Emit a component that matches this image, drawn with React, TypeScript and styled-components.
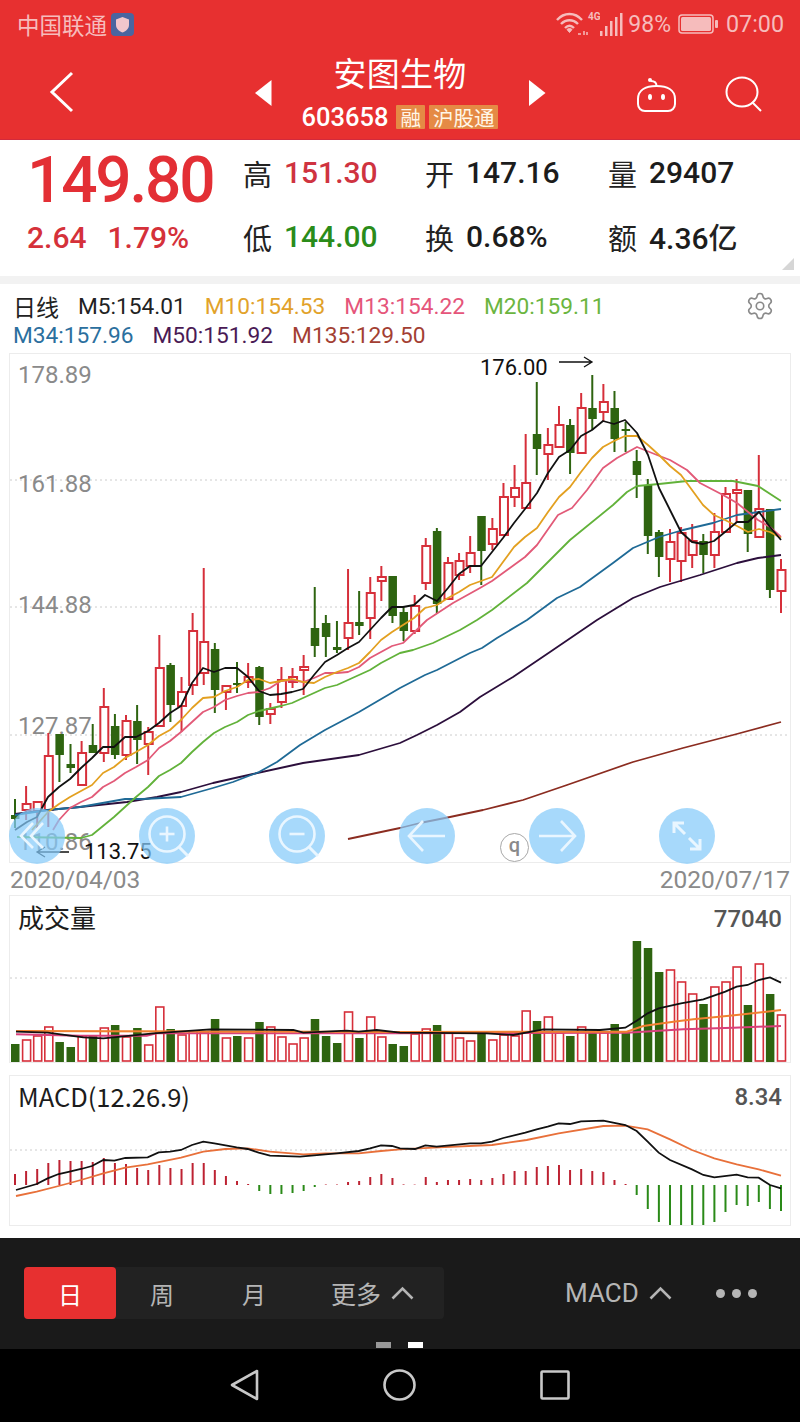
import styled, { createGlobalStyle } from "styled-components";
import { Settings } from "lucide-react";

const GlobalStyle = createGlobalStyle`
  html, body {
    margin: 0;
    padding: 0;
    background: #fff;
  }
  * { box-sizing: border-box; }
`;

const NUM = `Roboto, "Noto Sans CJK SC", sans-serif`;
const CJK = `"Noto Sans CJK SC", Roboto, sans-serif`;

const UP = "#d62f3a";
const DOWN = "#2e6410";

// wick top, wick bottom, body top, body bottom, all in page pixels
type Candle = [number, number, number, number];

const candles: Candle[] = [
  [799, 828, 815, 819], [786, 820, 804, 810], [802, 828, 802, 811], [733, 827, 756, 810],
  [734, 782, 734, 755], [744, 773, 764, 768], [741, 786, 753, 785], [724, 753, 745, 753],
  [688, 762, 707, 753], [714, 759, 726, 755], [715, 760, 721, 755], [705, 764, 721, 740],
  [727, 775, 732, 744], [635, 727, 668, 726], [663, 722, 665, 705], [677, 732, 692, 706],
  [613, 695, 631, 685], [568, 685, 642, 673], [643, 713, 649, 690], [685, 710, 686, 692],
  [662, 693, 683, 685], [663, 688, 677, 682], [666, 725, 667, 717], [703, 724, 709, 714],
  [667, 708, 680, 702], [668, 688, 677, 682], [655, 695, 667, 670], [587, 657, 628, 646],
  [615, 657, 623, 637], [621, 653, 647, 650], [569, 650, 623, 638], [591, 635, 622, 626],
  [577, 639, 593, 618], [566, 601, 577, 581], [576, 623, 576, 616], [607, 641, 612, 631],
  [595, 634, 606, 631], [538, 590, 546, 583], [528, 613, 531, 604], [557, 600, 563, 599],
  [553, 580, 561, 575], [536, 573, 553, 566], [516, 585, 516, 551], [518, 550, 529, 544],
  [483, 535, 497, 535], [465, 507, 488, 497], [434, 508, 483, 508], [382, 475, 434, 449],
  [428, 480, 445, 454], [406, 447, 425, 447], [419, 474, 425, 453], [393, 453, 408, 453],
  [375, 430, 408, 419], [384, 422, 402, 412], [391, 452, 408, 439], [422, 452, 429, 431],
  [450, 498, 461, 475], [479, 554, 485, 536], [530, 577, 532, 557], [529, 582, 542, 559],
  [527, 582, 533, 561], [524, 568, 541, 555], [534, 573, 541, 555], [513, 568, 532, 555],
  [487, 532, 494, 532], [479, 523, 490, 493], [490, 552, 490, 534], [455, 538, 509, 537],
  [509, 598, 509, 590], [559, 613, 570, 591],
];

// 1 = up (hollow red), 0 = down (solid green)
const isUp = [
  0, 1, 1, 1, 0, 0, 1, 0, 1, 0, 1, 0, 1, 1, 0, 1, 1, 1, 0, 1,
  0, 1, 0, 1, 1, 1, 1, 0, 0, 0, 1, 0, 1, 1, 0, 0, 1, 1, 0, 1,
  1, 1, 0, 1, 1, 1, 1, 0, 1, 1, 0, 1, 0, 1, 0, 0, 0, 0, 0, 1,
  1, 1, 0, 1, 1, 1, 0, 1, 0, 1,
];

const xAt = (i: number) => 15 + (766 / 69) * i;

// volume bar tops, read from the chart
const volumeTops = [
  1044, 1040, 1036, 1027, 1042, 1047, 1036, 1036, 1028, 1025, 1037, 1028, 1045, 1007, 1029,
  1035, 1031, 1032, 1019, 1038, 1036, 1038, 1022, 1027, 1037, 1044, 1038, 1019, 1036, 1043,
  1012, 1038, 1017, 1037, 1044, 1046, 1034, 1029, 1025, 1032, 1038, 1041, 1033, 1040, 1035,
  1036, 1011, 1021, 1017, 1033, 1036, 1027, 1032, 1033, 1024, 1032, 941, 948, 972, 970,
  982, 994, 1004, 987, 982, 967, 1005, 964, 994, 1015,
];

// macd histogram, signed height in pixels
const macdBars = [
  11, 14, 16, 22, 25, 24, 24, 23, 27, 22, 21, 17, 15, 20, 17, 16, 22, 22, 15, 9,
  4, 1, -6, -9, -9, -8, -6, -2, 0.5, 0.5, 3, 4, 8, 11, 7, 0.6, 0.4, 8, 3, 5,
  5, 6, 5, 7, 11, 14, 14, 18, 19, 20, 15, 16, 14, 13, 5, 1, -10, -24, -37, -40,
  -40, -40, -40, -37, -27, -20, -21, -17, -24, -26,
];

type Pt = [number, number];
const toPath = (pts: Pt[]) => pts.map((p, i) => `${i ? "L" : "M"}${p[0]} ${p[1]}`).join(" ");

const m5: Pt[] = [
  [15, 830], [27, 822], [37, 817], [48, 797], [59, 787], [70, 779], [81, 768], [92, 758], [103, 747],
  [114, 747], [125, 737], [136, 737], [148, 731], [159, 723], [170, 713], [181, 706], [192, 683],
  [203, 668], [214, 672], [225, 668], [237, 668], [248, 677], [259, 691], [270, 695], [281, 694],
  [292, 692], [303, 689], [314, 675], [325, 662], [337, 655], [348, 648], [359, 642], [370, 630],
  [381, 618], [392, 607], [403, 607], [414, 605], [425, 595], [437, 601], [448, 588], [459, 574],
  [470, 566], [481, 566], [492, 552], [503, 538], [514, 523], [525, 509], [537, 493], [548, 473],
  [559, 457], [570, 450], [581, 436], [592, 430], [603, 421], [614, 424], [625, 420], [637, 433],
  [648, 455], [659, 488], [670, 510], [681, 532], [692, 542], [703, 544], [714, 541], [725, 532],
  [737, 522], [748, 522], [759, 512], [770, 527], [781, 540],
];
const m10: Pt[] = [
  [32, 830], [48, 812], [59, 804], [70, 797], [81, 791], [92, 785], [103, 773], [114, 767], [125, 758],
  [136, 752], [148, 745], [159, 736], [170, 730], [181, 720], [192, 708], [203, 698], [214, 697],
  [225, 691], [237, 687], [248, 680], [259, 679], [270, 683], [281, 681], [292, 679], [303, 682],
  [314, 683], [325, 677], [337, 672], [348, 668], [359, 663], [370, 652], [381, 640], [392, 632],
  [403, 625], [414, 618], [425, 608], [437, 605], [448, 598], [459, 592], [470, 585], [481, 581],
  [492, 577], [503, 562], [514, 547], [525, 537], [537, 528], [548, 512], [559, 497], [570, 487],
  [581, 472], [592, 458], [603, 447], [614, 441], [625, 436], [637, 436], [648, 445], [659, 455],
  [670, 466], [681, 475], [692, 490], [703, 505], [714, 515], [725, 520], [737, 526], [748, 532],
  [759, 529], [770, 532], [781, 538],
];
const m13: Pt[] = [
  [53, 830], [59, 820], [70, 808], [81, 802], [92, 797], [103, 787], [114, 781], [125, 773], [136, 767],
  [148, 760], [159, 748], [170, 741], [181, 732], [192, 722], [203, 712], [214, 707], [225, 700],
  [237, 696], [248, 693], [259, 692], [270, 688], [281, 681], [292, 680], [303, 682], [314, 678],
  [325, 673], [337, 673], [348, 672], [359, 667], [370, 658], [381, 652], [392, 646], [403, 643],
  [427, 620], [453, 603], [480, 588], [492, 581], [525, 557], [537, 545], [558, 515], [572, 508],
  [587, 490], [603, 468], [617, 458], [637, 447], [657, 455], [670, 460], [687, 470], [700, 483],
  [723, 495], [737, 503], [758, 520], [770, 527], [781, 537],
];
const m20: Pt[] = [
  [17, 837], [81, 838], [92, 835], [114, 817], [125, 807], [136, 797], [148, 787], [159, 776], [170, 770],
  [181, 763], [192, 752], [203, 742], [214, 733], [225, 727], [237, 722], [248, 715], [259, 711],
  [281, 706], [292, 703], [303, 698], [314, 693], [325, 688], [337, 685], [348, 680], [359, 675],
  [370, 670], [381, 663], [400, 653], [413, 650], [433, 643], [460, 630], [477, 620], [492, 610],
  [527, 583], [570, 540], [613, 505], [627, 492], [637, 486], [659, 484], [687, 481], [733, 481],
  [758, 486], [781, 501],
];
const m34: Pt[] = [
  [15, 815], [48, 810], [80, 807], [125, 799], [143, 799], [181, 797], [213, 788], [233, 782], [259, 772],
  [277, 762], [300, 745], [325, 730], [359, 712], [400, 688], [425, 675], [437, 670], [470, 653],
  [482, 648], [497, 638], [527, 620], [557, 598], [580, 587], [613, 563], [633, 548], [659, 537],
  [683, 530], [713, 523], [737, 515], [759, 512], [781, 509],
];
const m50: Pt[] = [
  [15, 814], [48, 810], [80, 807], [127, 802], [157, 797], [181, 792], [213, 783], [253, 774], [303, 763],
  [359, 755], [400, 743], [417, 735], [437, 725], [460, 712], [480, 697], [513, 677], [550, 652],
  [597, 620], [633, 598], [660, 587], [700, 575], [737, 563], [758, 558], [781, 555],
];
const m135: Pt[] = [
  [348, 839], [400, 828], [420, 823], [450, 817], [483, 810], [523, 800], [567, 785], [633, 762],
  [683, 748], [733, 735], [781, 722],
];
const maLines: [Pt[], string][] = [
  [m135, "#8b2c20"], [m50, "#2c0f3c"], [m34, "#1f6a96"], [m20, "#62b23a"],
  [m13, "#e25a78"], [m10, "#e3a020"], [m5, "#111"],
];

// lower panels are read at 3x, so convert once here
const z = (ox: number, oy: number, pts: Pt[]): Pt[] =>
  pts.map(([a, b]) => [ox + a / 3, oy + b / 3]);

const volBlack = [
  ...z(0, 890, [[48, 425], [143, 428], [250, 442], [310, 445], [460, 430], [630, 418], [880, 420], [910, 428], [1040, 422], [1076, 425], [1130, 420], [1200, 428]]),
  ...z(400, 890, [[260, 430], [340, 435], [430, 418], [600, 420], [676, 413], [710, 392], [743, 370], [776, 355], [843, 340], [910, 328], [976, 305], [1010, 290], [1043, 285], [1076, 270], [1110, 262], [1143, 278]]),
];
const volOrange = [
  ...z(0, 890, [[48, 423], [1200, 426]]),
  ...z(400, 890, [[680, 425], [730, 408], [820, 395], [880, 388], [1010, 375], [1143, 360]]),
];
const volPink = [
  ...z(0, 890, [[48, 433], [240, 437], [440, 437], [470, 430], [1200, 430]]),
  ...z(400, 890, [[680, 428], [850, 418], [1000, 413], [1143, 408]]),
];
const macdBlack = [
  ...z(0, 1070, [[48, 360], [110, 342], [143, 325], [176, 312], [209, 305], [243, 297], [276, 288], [310, 270], [343, 272], [376, 264], [443, 262], [476, 247], [510, 245], [543, 240], [576, 225], [610, 215], [643, 220], [710, 232], [743, 237], [776, 248], [810, 257], [900, 260], [1010, 250], [1076, 243], [1110, 235], [1143, 226], [1176, 228]]),
  ...z(400, 1070, [[0, 235], [45, 237], [76, 226], [110, 230], [210, 220], [243, 220], [276, 215], [310, 204], [376, 188], [410, 178], [443, 170], [476, 160], [510, 162], [543, 154], [610, 152], [676, 165], [710, 183], [743, 215], [776, 248], [810, 270], [876, 298], [910, 315], [943, 322], [1010, 314], [1043, 322], [1076, 323], [1110, 345], [1143, 355]]),
];
const macdOrange = [
  ...z(0, 1070, [[48, 378], [110, 365], [176, 348], [243, 330], [310, 310], [376, 293], [443, 283], [543, 263], [610, 245], [676, 237], [743, 235], [810, 245], [910, 253], [976, 250], [1076, 250], [1143, 243]]),
  ...z(400, 1070, [[0, 238], [100, 233], [276, 225], [380, 210], [476, 190], [610, 168], [676, 167], [743, 178], [810, 208], [876, 240], [943, 265], [1010, 283], [1076, 298], [1143, 317]]),
];

const Page = styled.div`
  width: 800px;
  height: 1422px;
  display: flex;
  flex-direction: column;
  overflow: hidden;
  background: #fff;
  font-family: ${NUM};
`;

const Header = styled.header`
  height: 140px;
  flex: none;
  background: #e73030;
  border-bottom: 1px solid #d22a3c;
`;

const StatusBar = styled.div`
  height: 48px;
  padding: 0 16px 0 17px;
  display: flex;
  align-items: center;
  justify-content: space-between;
  color: #f6bcbc;
  font-size: 22.5px;
`;

const StatusGroup = styled.div`
  display: flex;
  align-items: center;
`;

const Carrier = styled.span`
  font-family: ${CJK};
  margin-right: 4px;
`;

const BatteryLabel = styled.span`
  margin: 0 7px 0 5px;
  font-size: 23px;
`;

const Clock = styled.span`
  margin-left: 8px;
  font-size: 23.3px;
`;

const Nav = styled.div`
  height: 91px;
  position: relative;
  display: flex;
  flex-direction: column;
  align-items: center;
  color: #fff;
`;

const Title = styled.div`
  margin-top: 3px;
  font-family: ${CJK};
  font-size: 33px;
  line-height: 42px;
  letter-spacing: 0.3px;
`;

const CodeRow = styled.div`
  display: flex;
  align-items: center;
  gap: 4px;
  margin-top: 12px;
  height: 24px;
`;

const Code = styled.span`
  font-size: 25.5px;
  font-weight: 500;
  margin-right: 4px;
`;

const Tag = styled.span`
  height: 24px;
  padding: 0 4px;
  display: flex;
  align-items: center;
  background: #e58a45;
  color: #fff6e8;
  font-family: ${CJK};
  font-size: 20.5px;
  border-radius: 1px;
`;

const NavIcon = styled.svg<{ $left: number; $top: number }>`
  position: absolute;
  left: ${(p) => p.$left}px;
  top: ${(p) => p.$top}px;
`;

const Stats = styled.section`
  height: 136px;
  flex: none;
  position: relative;
  padding: 8px 0 0 27px;
  display: grid;
  grid-template-columns: 216px 182px 183px 1fr;
  grid-template-rows: 50px 54px;
  row-gap: 12px;
  align-items: center;
`;

const Price = styled.div`
  color: #e32f35;
  font-size: 64px;
  font-weight: 500;
  letter-spacing: -2.2px;
  line-height: 50px;
  transform: translate(0px, 8px);
`;

const Change = styled.div`
  color: #d5313a;
  font-size: 30px;
  display: flex;
  gap: 21px;
  font-weight: 500;
`;

const Stat = styled.div`
  display: flex;
  align-items: center;
  gap: 12px;
  font-size: 30px;
  line-height: 40px;
`;

const StatName = styled.span`
  font-family: ${CJK};
  font-size: 29px;
  color: #222;
`;

const StatValue = styled.span<{ $color?: string }>`
  color: ${(p) => p.$color || "#1c1c1c"};
  font-weight: 500;
  font-family: ${NUM};
`;

const Corner = styled.div`
  position: absolute;
  right: 6px;
  bottom: 6px;
  width: 0;
  height: 0;
  border-left: 12px solid transparent;
  border-bottom: 12px solid #d6d6d6;
`;

const Strip = styled.div`
  height: 8px;
  flex: none;
  background: #f2f2f2;
`;

const Legend = styled.div`
  height: 69px;
  flex: none;
  position: relative;
  padding: 8px 0 0 13px;
  font-size: 22.7px;
  line-height: 29px;
`;

const LegendRow = styled.div`
  display: flex;
  gap: 19px;
`;

const LegendName = styled.span`
  font-family: ${CJK};
  font-size: 23px;
  color: #222;
`;

const LegendItem = styled.span<{ $color: string }>`
  color: ${(p) => p.$color};
`;

const Gear = styled.div`
  position: absolute;
  right: 25px;
  top: 7px;
  color: #8a8a8a;
  display: flex;
`;

const Panel = styled.div<{ $height: number }>`
  position: relative;
  flex: none;
  height: ${(p) => p.$height}px;
  margin: 0 9px;
  border: 1px solid #ececec;
`;

const PanelSvg = styled.svg`
  display: block;
  position: absolute;
  left: -1px;
  top: -1px;
`;

const AxisText = styled.text`
  font-family: ${NUM};
  font-size: 24px;
  fill: #8a8a8a;
`;

const MarkText = styled.text`
  font-family: ${NUM};
  font-size: 22px;
  fill: #111;
`;

const Controls = styled.div`
  position: absolute;
  left: -1px;
  bottom: -2px;
  display: flex;
  gap: 74px;
`;

const RoundButton = styled.button`
  width: 56px;
  height: 56px;
  padding: 0;
  border: none;
  border-radius: 50%;
  background: rgba(133, 203, 250, 0.72);
  display: flex;
  align-items: center;
  justify-content: center;
`;

const QBadge = styled.div`
  position: absolute;
  left: 490px;
  bottom: 0;
  width: 29px;
  height: 29px;
  border: 1px solid #a8a8a8;
  border-radius: 50%;
  background: #fff;
  color: #8a8a8a;
  font-size: 20px;
  font-weight: 500;
  line-height: 23px;
  text-align: center;
`;

const DateRow = styled.div`
  height: 32px;
  flex: none;
  padding: 0 10px;
  display: flex;
  justify-content: space-between;
  align-items: center;
  color: #8a8a8a;
  font-size: 24.5px;
`;

const PanelTitle = styled.div<{ $size: number; $top: number }>`
  position: absolute;
  left: 8px;
  top: ${(p) => p.$top}px;
  font-family: ${CJK};
  font-size: ${(p) => p.$size}px;
  line-height: 36px;
  color: #1c1c1c;
`;

const PanelValue = styled.div<{ $top: number }>`
  position: absolute;
  right: 8px;
  top: ${(p) => p.$top}px;
  font-size: 24px;
  font-weight: 500;
  line-height: 36px;
  color: #555;
`;

const PanelGap = styled.div`
  height: 12px;
  flex: none;
`;

const Toolbar = styled.footer`
  margin-top: 12px;
  height: 111px;
  flex: none;
  position: relative;
  background: #1a1a1a;
  padding: 29px 0 0 24px;
  display: flex;
  align-items: flex-start;
  color: #b5b5b5;
`;

const Periods = styled.div`
  width: 420px;
  height: 52px;
  display: flex;
  align-items: center;
  background: #222;
  border-radius: 4px;
  font-family: ${CJK};
  font-size: 24px;
`;

const Period = styled.div<{ $active?: boolean }>`
  width: 92px;
  height: 52px;
  display: flex;
  align-items: center;
  justify-content: center;
  border-radius: 4px;
  background: ${(p) => (p.$active ? "#e73030" : "transparent")};
  color: ${(p) => (p.$active ? "#fff" : "#b5b5b5")};
`;

const MorePeriod = styled(Period)`
  width: 144px;
  padding-left: 31px;
  justify-content: flex-start;
  gap: 10px;
  font-size: 25px;
`;

const IndicatorPick = styled.div`
  margin-left: 121px;
  height: 52px;
  display: flex;
  align-items: center;
  gap: 10px;
  font-size: 26px;
`;

const Dots = styled.div`
  margin-left: 44px;
  height: 52px;
  display: flex;
  align-items: center;
  gap: 7px;
`;

const Dot = styled.span`
  width: 9px;
  height: 9px;
  border-radius: 50%;
  background: #b5b5b5;
`;

const Pager = styled.div`
  position: absolute;
  left: 376px;
  bottom: 1px;
  display: flex;
  gap: 17px;
`;

const PagerMark = styled.span<{ $on?: boolean }>`
  width: 15px;
  height: 6px;
  background: ${(p) => (p.$on ? "#fff" : "#999")};
`;

const SystemBar = styled.nav`
  flex: 1;
  background: #000;
  display: flex;
  align-items: center;
  padding: 0 0 2px 229px;
  gap: 124px;
`;

const Chevron = () => (
  <svg width="23" height="14" viewBox="0 0 23 14" fill="none" stroke="currentColor" strokeWidth="2.6">
    <path d="M1.5 12.5 11.5 2.5 21.5 12.5" />
  </svg>
);

const Glass = ({ minus }: { minus?: boolean }) => (
  <svg width="56" height="56" viewBox="0 0 56 56" fill="none" stroke="#e9f6ff" strokeWidth="2.6">
    <circle cx="28" cy="26" r="17.5" />
    <path d="M40 39 49 48" strokeWidth="3" />
    <path d="M20.5 26h15" />
    {!minus && <path d="M28 18.5v15" />}
  </svg>
);

function Candles() {
  return (
    <g>
      {candles.map(([wt, wb, bt, bb], i) => {
        const x = xAt(i);
        const up = isUp[i] === 1;
        const color = up ? UP : DOWN;
        return (
          <g key={i}>
            <path d={`M${x} ${wt}V${wb}`} stroke={color} strokeWidth="2" />
            {up ? (
              <rect x={x - 3.5} y={bt} width="8" height={Math.max(bb - bt, 2)} fill="#fff" stroke={color} strokeWidth="2" />
            ) : (
              <rect x={x - 4} y={bt} width="8.5" height={Math.max(bb - bt, 2)} fill={color} />
            )}
          </g>
        );
      })}
    </g>
  );
}

function App() {
  return (
    <>
      <GlobalStyle />
      <Page>
        <Header>
          <StatusBar>
            <StatusGroup>
              <Carrier>中国联通</Carrier>
              <svg width="23" height="23" viewBox="0 0 23 23">
                <rect width="23" height="23" rx="4" fill="#4a65a0" />
                <path d="M11.5 4 18 6.5V12c0 3.5-2.8 6-6.5 7.5C7.8 18 5 15.5 5 12V6.5Z" fill="#f2c6cc" />
              </svg>
            </StatusGroup>
            <StatusGroup>
              <svg width="44" height="26" viewBox="0 0 44 26" fill="none" stroke="#f6bcbc">
                <path d="M1 9C8 1 19 1 26 9M5 13c5-5 12-5 17 0M9 17c3-3 6-3 9 0" strokeWidth="2.4" />
                <path d="M13.5 21.5 11 18.5c1.6-1.3 3.4-1.3 5 0Z" fill="#f6bcbc" />
                <path d="M22 23h3M28 20v4M31 21v3" strokeWidth="1.5" />
                <text x="32" y="9" fontSize="10" fontWeight="700" fill="#f6bcbc" stroke="none" fontFamily="Roboto">4G</text>
              </svg>
              <svg width="23" height="26" viewBox="0 0 23 26" fill="#f6bcbc">
                <rect x="0" y="20" width="2.5" height="5" />
                <rect x="5" y="15" width="2.5" height="10" />
                <rect x="10" y="10" width="2.5" height="15" />
                <rect x="15" y="6" width="2.5" height="19" />
                <rect x="20" y="2" width="2.5" height="23" />
              </svg>
              <BatteryLabel>98%</BatteryLabel>
              <svg width="40" height="20" viewBox="0 0 40 20">
                <rect x="1" y="1" width="34" height="18" rx="3" fill="none" stroke="#f6bcbc" strokeWidth="1.5" />
                <rect x="3" y="3" width="30" height="14" rx="1.5" fill="#f6bcbc" />
                <rect x="37" y="6" width="3" height="8" rx="1" fill="#f6bcbc" />
              </svg>
              <Clock>07:00</Clock>
            </StatusGroup>
          </StatusBar>
          <Nav>
            <NavIcon $left={49} $top={23} width="26" height="42" viewBox="0 0 26 42" fill="none" stroke="#fff" strokeWidth="3">
              <path d="M23 2 3 21 23 40" />
            </NavIcon>
            <NavIcon $left={255} $top={32} width="17" height="26" viewBox="0 0 17 26" fill="#fff">
              <path d="M16.5 0V26L0 13Z" />
            </NavIcon>
            <Title>安图生物</Title>
            <CodeRow>
              <Code>603658</Code>
              <Tag>融</Tag>
              <Tag>沪股通</Tag>
            </CodeRow>
            <NavIcon $left={529} $top={32} width="17" height="26" viewBox="0 0 17 26" fill="#fff">
              <path d="M0 0V26L16.5 13Z" />
            </NavIcon>
            <NavIcon $left={636} $top={28} width="41" height="37" viewBox="0 0 41 37" fill="none" stroke="#fff" strokeWidth="2">
              <path d="M2 23C2 14 10 10 20.5 10S39 14 39 23v5c0 4-3 7-7 7H9c-4 0-7-3-7-7Z" />
              <path d="M20.5 10C20.5 6 18 5 15 5" />
              <circle cx="14" cy="4" r="2" fill="#fff" stroke="none" />
              <ellipse cx="14" cy="21" rx="2" ry="3" fill="#fff" stroke="none" />
              <ellipse cx="27" cy="21" rx="2" ry="3" fill="#fff" stroke="none" />
            </NavIcon>
            <NavIcon $left={725} $top={28} width="38" height="36" viewBox="0 0 38 36" fill="none" stroke="#fff" strokeWidth="2">
              <ellipse cx="17" cy="16" rx="15.5" ry="14.5" />
              <path d="M27 26 36 35" />
            </NavIcon>
          </Nav>
        </Header>

        <Stats>
          <Price>149.80</Price>
          <Stat>
            <StatName>高</StatName>
            <StatValue $color="#cf3340">151.30</StatValue>
          </Stat>
          <Stat>
            <StatName>开</StatName>
            <StatValue>147.16</StatValue>
          </Stat>
          <Stat>
            <StatName>量</StatName>
            <StatValue>29407</StatValue>
          </Stat>
          <Change>
            <span>2.64</span>
            <span>1.79%</span>
          </Change>
          <Stat>
            <StatName>低</StatName>
            <StatValue $color="#2a8c1a">144.00</StatValue>
          </Stat>
          <Stat>
            <StatName>换</StatName>
            <StatValue>0.68%</StatValue>
          </Stat>
          <Stat>
            <StatName>额</StatName>
            <StatValue>
              4.36<StatName>亿</StatName>
            </StatValue>
          </Stat>
          <Corner />
        </Stats>
        <Strip />

        <Legend>
          <LegendRow>
            <LegendName>日线</LegendName>
            <LegendItem $color="#222">M5:154.01</LegendItem>
            <LegendItem $color="#e2a22a">M10:154.53</LegendItem>
            <LegendItem $color="#e5557a">M13:154.22</LegendItem>
            <LegendItem $color="#6bb53f">M20:159.11</LegendItem>
          </LegendRow>
          <LegendRow>
            <LegendItem $color="#2b6f9e">M34:157.96</LegendItem>
            <LegendItem $color="#4a1a55">M50:151.92</LegendItem>
            <LegendItem $color="#a33f33">M135:129.50</LegendItem>
          </LegendRow>
          <Gear>
            <Settings size={30} strokeWidth={1.3} />
          </Gear>
        </Legend>

        <Panel $height={510}>
          <PanelSvg width="782" height="510" viewBox="9 353 782 510">
            {[480, 607, 735].map((y) => (
              <path key={y} d={`M10 ${y}H790`} stroke="#ccc" strokeWidth="1" strokeDasharray="2 3" />
            ))}
            <AxisText x="18" y="383">178.89</AxisText>
            <AxisText x="18" y="492">161.88</AxisText>
            <AxisText x="18" y="613">144.88</AxisText>
            <AxisText x="18" y="734">127.87</AxisText>
            <AxisText x="18" y="850">110.86</AxisText>
            <Candles />
            {maLines.map(([pts, color]) => (
              <path key={color} d={toPath(pts)} fill="none" stroke={color} strokeWidth="1.8" strokeLinejoin="round" />
            ))}
            <MarkText x="480" y="375">176.00</MarkText>
            <path d="M559 362H592M584 357l8 5-8 5" fill="none" stroke="#111" strokeWidth="1.3" />
            <MarkText x="84" y="859">113.75</MarkText>
            <path d="M69 852H37M45 847l-8 5 8 5" fill="none" stroke="#111" strokeWidth="1.3" />
          </PanelSvg>
          <QBadge>q</QBadge>
          <Controls>
            <RoundButton>
              <svg width="56" height="56" viewBox="0 0 56 56" fill="none" stroke="#e9f6ff" strokeWidth="2.6">
                <path d="M24 15 12 28 24 40M34 15 22 28 34 40" />
              </svg>
            </RoundButton>
            <RoundButton>
              <Glass />
            </RoundButton>
            <RoundButton>
              <Glass minus />
            </RoundButton>
            <RoundButton>
              <svg width="56" height="56" viewBox="0 0 56 56" fill="none" stroke="#e9f6ff" strokeWidth="2.6">
                <path d="M46 28H10M24 13 10 28 24 43" />
              </svg>
            </RoundButton>
            <RoundButton>
              <svg width="56" height="56" viewBox="0 0 56 56" fill="none" stroke="#e9f6ff" strokeWidth="2.6">
                <path d="M10 28H46M32 13 46 28 32 43" />
              </svg>
            </RoundButton>
            <RoundButton>
              <svg width="56" height="56" viewBox="0 0 56 56" fill="none" stroke="#e9f6ff" strokeWidth="3">
                <path d="M16 16 26 26M15 25V15H25M30 30 41 41M41 31V41H31" />
              </svg>
            </RoundButton>
          </Controls>
        </Panel>

        <DateRow>
          <span>2020/04/03</span>
          <span>2020/07/17</span>
        </DateRow>

        <Panel $height={168}>
          <PanelSvg width="782" height="168" viewBox="9 895 782 168">
            <path d="M10 978H790" stroke="#ccc" strokeDasharray="2 3" />
            {volumeTops.map((top, i) => {
              const x = xAt(i);
              return isUp[i] === 1 ? (
                <rect key={i} x={x - 3.5} y={top} width="8" height={1061 - top} fill="#fff" stroke={UP} strokeWidth="1.6" />
              ) : (
                <rect key={i} x={x - 4} y={top} width="8.5" height={1062 - top} fill={DOWN} />
              );
            })}
            <path d={toPath(volPink)} fill="none" stroke="#d8407a" strokeWidth="2" />
            <path d={toPath(volOrange)} fill="none" stroke="#f08030" strokeWidth="2" />
            <path d={toPath(volBlack)} fill="none" stroke="#111" strokeWidth="1.8" />
          </PanelSvg>
          <PanelTitle $size={26} $top={3}>成交量</PanelTitle>
          <PanelValue $top={5}>77040</PanelValue>
        </Panel>

        <PanelGap />

        <Panel $height={151}>
          <PanelSvg width="782" height="151" viewBox="9 1075 782 151">
            <path d="M10 1150H790" stroke="#ccc" strokeDasharray="2 3" />
            {macdBars.map((h, i) => (
              <path
                key={i}
                d={`M${xAt(i)} 1185V${1185 - h}`}
                stroke={h > 0 ? "#bd2232" : "#2a8a18"}
                strokeWidth="2"
              />
            ))}
            <path d={toPath(macdOrange)} fill="none" stroke="#e8703a" strokeWidth="1.8" />
            <path d={toPath(macdBlack)} fill="none" stroke="#111" strokeWidth="1.8" />
          </PanelSvg>
          <PanelTitle $size={25.5} $top={2}>MACD(12.26.9)</PanelTitle>
          <PanelValue $top={3}>8.34</PanelValue>
        </Panel>

        <Toolbar>
          <Periods>
            <Period $active>日</Period>
            <Period>周</Period>
            <Period>月</Period>
            <MorePeriod>
              更多
              <Chevron />
            </MorePeriod>
          </Periods>
          <IndicatorPick>
            MACD
            <Chevron />
          </IndicatorPick>
          <Dots>
            <Dot />
            <Dot />
            <Dot />
          </Dots>
          <Pager>
            <PagerMark />
            <PagerMark $on />
          </Pager>
        </Toolbar>

        <SystemBar>
          <svg width="30" height="32" viewBox="0 0 30 32" fill="none" stroke="#c8c8c8" strokeWidth="2.6" strokeLinejoin="round">
            <path d="M28 2V30L3 16Z" />
          </svg>
          <svg width="33" height="32" viewBox="0 0 33 32" fill="none" stroke="#c8c8c8" strokeWidth="2.6">
            <ellipse cx="16.5" cy="16" rx="15" ry="14.5" />
          </svg>
          <svg width="30" height="30" viewBox="0 0 30 30" fill="none" stroke="#c8c8c8" strokeWidth="2.6">
            <rect x="1.5" y="1.5" width="27" height="27" rx="1" />
          </svg>
        </SystemBar>
      </Page>
    </>
  );
}

export default App;
